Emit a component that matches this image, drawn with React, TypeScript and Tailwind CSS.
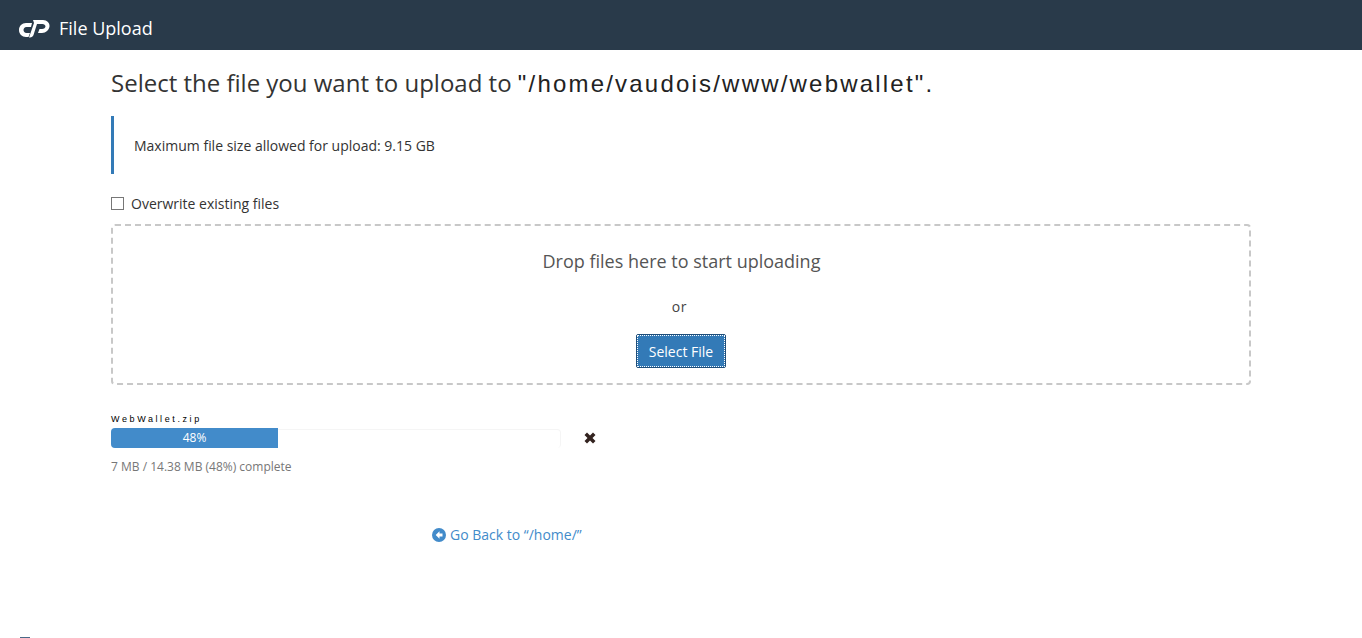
function CpanelLogo() {
  return (
    <svg width="31" height="20" viewBox="0 0 31 20" fill="#ffffff">
      <path d="M13 5H7C3 5 0 8 0 12 0 16 3 19 7 19H9.500L11 15H7.500C5.500 15 4.500 13.500 4.500 12 4.500 10.500 5.500 9 7.500 9H12Z" />
      <path d="M14 2H24C28 2 31 5 30.500 8.500 30 12 27 15 23 15H19L20.500 11H23C25 11 26.500 9.500 26.500 8.500 26.500 7 25 6 23.500 6H18L14.500 17C14 18.500 12.500 19.500 11 19.500H10L15 5Z" />
    </svg>
  );
}

export default function App() {
  return (
    <div className="relative h-[638px] overflow-hidden bg-white font-['Open_Sans',sans-serif] text-[#333333]">
      <header className="h-[50px] bg-[#293a4a] flex items-center pl-[19px] pt-[6px] gap-[9px] text-white">
        <CpanelLogo />
        <span className="text-[18px]">File Upload</span>
      </header>

      <main className="w-[1140px] ml-[111px]">
        <h1 className="mt-[16px] text-[24px] leading-[33px] whitespace-nowrap">
          Select the file you want to upload to{' '}
          <span className="font-['Liberation_Sans',sans-serif] tracking-[2.2px] text-[#222222]">"/home/vaudois/www/webwallet".</span>
        </h1>

        <div className="mt-[16px] h-[58px] border-l-[3px] border-[#337ab7] pl-[20px] flex items-center text-[14px]">
          Maximum file size allowed for upload: 9.15 GB
        </div>

        <label className="mt-[19px] flex items-center gap-[7px] h-[20px] text-[14px]">
          <span className="w-[13px] h-[13px] border border-[#777777] bg-white" />
          Overwrite existing files
        </label>

        <div className="mt-[11px] h-[161px] border-2 border-dashed border-[#c8c8c8] rounded-[4px] flex flex-col items-center">
          <p className="mt-[23px] ml-[1px] text-[18px] leading-[25px] text-[#555555]">Drop files here to start uploading</p>
          <p className="mt-[23px] -ml-[3px] text-[14px] leading-[19px] tracking-[0.8px] text-[#444444]">or</p>
          <button className="mt-[18px] h-[34px] px-[12px] bg-[#337ab7] border border-[#1f4e79] rounded-[2px] text-white text-[14px] outline-1 outline-dotted outline-white -outline-offset-2">
            Select File
          </button>
        </div>

        <div className="mt-[28px] text-[9px] leading-[12px] tracking-[2.6px] font-['Liberation_Sans',sans-serif] text-black">WebWallet.zip</div>
        <div className="mt-[3px] flex items-center">
          <div className="w-[450px] h-[20px] flex">
            <div className="w-[167px] h-full bg-[#428bca] rounded-l-[4px] text-white text-[12px] leading-[20px] text-center">48%</div>
            <div className="flex-1 mt-px border-t border-r border-[#f5f5f5] rounded-r-[4px]" />
          </div>
          <svg className="ml-[23px]" width="12" height="12" viewBox="0 0 12 12" fill="#33231f">
            <path d="M3 .5 6 3.500 9 .5 11.500 3 8.500 6 11.500 9 9 11.500 6 8.500 3 11.500 .5 9 3.500 6 .5 3Z" />
          </svg>
        </div>
        <p className="mt-[10px] text-[12px] leading-[17px] text-[#777777]">7 MB / 14.38 MB (48%) complete</p>
      </main>

      <footer className="mt-[49px] ml-[432px] flex items-center gap-[4px] text-[14px] text-[#428bca]">
        <svg width="14" height="14" viewBox="0 0 14 14">
          <circle cx="7" cy="7" r="7" fill="#428bca" />
          <path d="M7.500 3.200 3.700 7l3.800 3.800V8.500h3V5.500h-3z" fill="#ffffff" />
        </svg>
        Go Back to “/home/”
      </footer>

      {/* clipped speck at the bottom edge */}
      <div className="absolute left-[20px] top-[637px] w-[10px] h-[1px] bg-[#4a6a88]" />
    </div>
  );
}
